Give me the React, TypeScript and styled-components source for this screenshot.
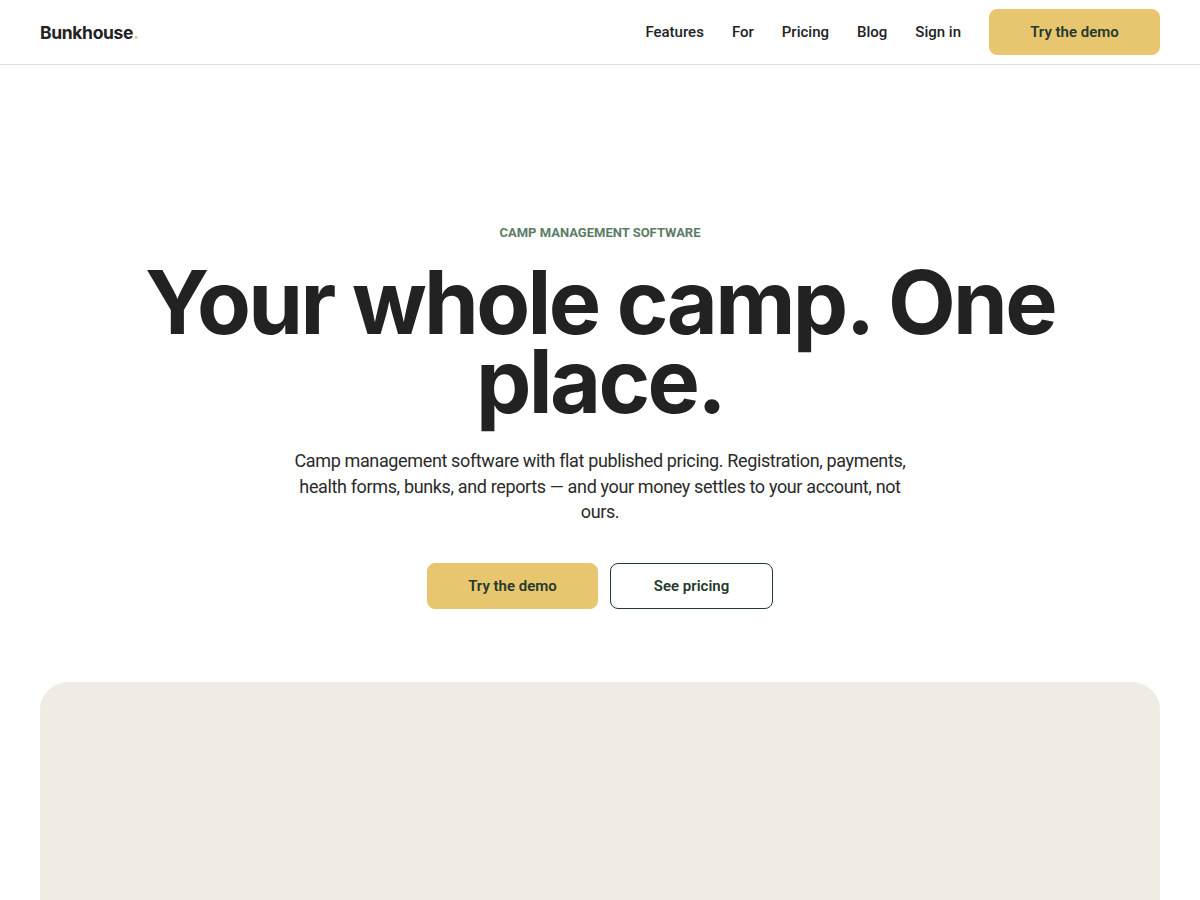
import styled, { createGlobalStyle } from "styled-components";

const GlobalStyle = createGlobalStyle`
  html, body {
    margin: 0;
    padding: 0;
    background: #ffffff;
    font-family: Roboto, "Liberation Sans", sans-serif;
    color: #222222;
  }
  * {
    box-sizing: border-box;
  }
`;

const navLinks = ["Features", "For", "Pricing", "Blog", "Sign in"];

const App = () => {
  return (
    <>
      <GlobalStyle />
      <Header>
        <Logo>
          Bunkhouse<Dot>.</Dot>
        </Logo>
        <Nav>
          {navLinks.map((link) => (
            <NavLink key={link} href="#">
              {link}
            </NavLink>
          ))}
          <Button $variant="primary" $width={171}>
            Try the demo
          </Button>
        </Nav>
      </Header>
      <Hero>
        <Eyebrow>Camp management software</Eyebrow>
        <Title>Your whole camp. One place.</Title>
        <Lead>
          Camp management software with flat published pricing. Registration,
          payments, health forms, bunks, and reports — and your money settles to
          your account, not ours.
        </Lead>
        <Actions>
          <Button $variant="primary" $width={171}>
            Try the demo
          </Button>
          <Button $variant="outline" $width={163}>
            See pricing
          </Button>
        </Actions>
      </Hero>
      <Preview />
    </>
  );
};
export default App;

const Header = styled.header`
  height: 65px;
  display: flex;
  align-items: center;
  justify-content: space-between;
  padding: 0 40px;
  border-bottom: 1px solid #e4e1d6;
`;

const Logo = styled.div`
  font-family: Inter, sans-serif;
  font-size: 17.5px;
  font-weight: 700;
  letter-spacing: -0.02em;
  color: #222222;
`;

const Dot = styled.span`
  color: #e8c670;
`;

const Nav = styled.nav`
  display: flex;
  align-items: center;
  gap: 28px;
`;

const NavLink = styled.a`
  font-size: 15px;
  font-weight: 500;
  color: #222222;
  text-decoration: none;
`;

const Button = styled.button<{ $variant: "primary" | "outline"; $width: number }>`
  width: ${(p) => p.$width}px;
  height: 46px;
  border-radius: 8px;
  font-family: Roboto, "Liberation Sans", sans-serif;
  font-size: 15px;
  font-weight: 600;
  cursor: pointer;
  color: #243a2c;
  background: ${(p) => (p.$variant === "primary" ? "#e8c670" : "#ffffff")};
  border: 1px solid ${(p) => (p.$variant === "primary" ? "#e8c670" : "#243a2c")};
`;

const Hero = styled.section`
  display: flex;
  flex-direction: column;
  align-items: center;
  text-align: center;
  padding: 160px 40px 0;
`;

const Eyebrow = styled.div`
  font-size: 13px;
  font-weight: 700;
  text-transform: uppercase;
  color: #5b7d66;
  line-height: 16px;
`;

const Title = styled.h1`
  margin: 22px 0 0;
  max-width: 960px;
  font-family: Inter, sans-serif;
  font-size: 88px;
  font-weight: 700;
  line-height: 0.9;
  letter-spacing: -0.03em;
  color: #222222;
`;

const Lead = styled.p`
  margin: 27px 0 0;
  max-width: 620px;
  font-size: 18px;
  line-height: 25.5px;
  letter-spacing: -0.02em;
  color: #2a2a2a;
`;

const Actions = styled.div`
  display: flex;
  gap: 12px;
  margin-top: 38px;
`;

const Preview = styled.div`
  margin: 73px 40px 0;
  height: 400px;
  border-radius: 28px;
  background: #f0ece4;
`;
